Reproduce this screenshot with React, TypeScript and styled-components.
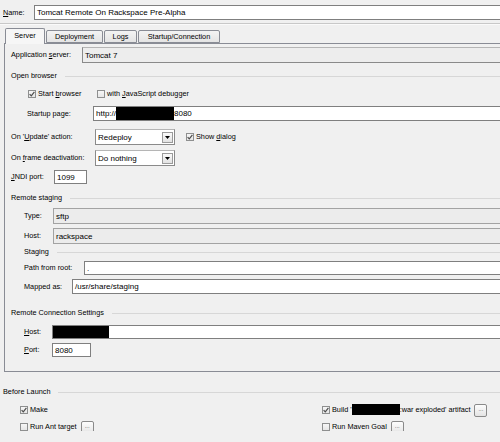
import React from "react";
import styled, { createGlobalStyle } from "styled-components";

const GlobalStyle = createGlobalStyle`
  body {
    margin: 0;
    background: #f0f0f0;
  }
`;

const Root = styled.div`
  width: 500px;
  height: 442px;
  overflow: hidden;
  background: #f0f0f0;
  font-family: "Liberation Sans", Arial, sans-serif;
  font-size: 7.3px;
  color: #000;
`;

// the original capture is cut a little above the window bottom
const Clip = styled.div`
  height: 431px;
  overflow: hidden;
  display: flex;
  flex-direction: column;
`;

const Row = styled.div<{ $top: number; $h: number; $indent: number }>`
  display: flex;
  align-items: center;
  flex: none;
  margin-top: ${(p) => p.$top}px;
  height: ${(p) => p.$h}px;
  padding-left: ${(p) => p.$indent}px;
  white-space: nowrap;
`;

const Label = styled.span<{ $w?: number }>`
  flex: none;
  width: ${(p) => (p.$w ? `${p.$w}px` : "auto")};
  line-height: 1;
`;

const Field = styled.div<{ $w?: number; $gray?: boolean }>`
  box-sizing: border-box;
  height: 100%;
  flex: ${(p) => (p.$w ? "none" : "1")};
  width: ${(p) => (p.$w ? `${p.$w}px` : "auto")};
  display: flex;
  align-items: center;
  padding-left: 2px;
  border: 1px solid ${(p) => (p.$gray ? "#a3a3a3" : "#7f7f7f")};
  background: ${(p) => (p.$gray ? "#ececec" : "#ffffff")};
  font-size: 8px;
  overflow: hidden;
`;

const Redacted = styled.span<{ $w: number }>`
  display: inline-block;
  flex: none;
  width: ${(p) => p.$w}px;
  height: 100%;
  background: #000;
`;

const InlineRedacted = styled.span<{ $w: number }>`
  display: inline-block;
  width: ${(p) => p.$w}px;
  height: 11px;
  background: #000;
  vertical-align: middle;
  margin-top: -2px;
`;

const Separator = styled.div`
  flex: none;
  height: 1px;
  margin-top: 3px;
  background: #c8c8c8;
  border-bottom: 1px solid #fafafa;
`;

const TabBar = styled.div`
  flex: none;
  display: flex;
  align-items: flex-end;
  height: 15px;
  margin-top: 3px;
  padding-left: 5px;
  gap: 1px;
  position: relative;
  z-index: 1;
`;

const Tab = styled.div<{ $active?: boolean; $w: number }>`
  box-sizing: border-box;
  width: ${(p) => p.$w}px;
  height: ${(p) => (p.$active ? 16 : 13)}px;
  margin-bottom: ${(p) => (p.$active ? -1 : 0)}px;
  border: 1px solid #898c95;
  border-bottom: ${(p) => (p.$active ? "none" : "1px solid #898c95")};
  border-radius: 2px 2px 0 0;
  background: ${(p) =>
    p.$active ? "#f6f6f6" : "linear-gradient(#f3f3f3, #e4e4e4)"};
  display: flex;
  align-items: center;
  justify-content: center;
  padding-bottom: ${(p) => (p.$active ? 2 : 0)}px;
`;

const Panel = styled.div`
  box-sizing: border-box;
  flex: none;
  width: 530px;
  height: 329px;
  margin-left: 4px;
  border: 1px solid #898c95;
  display: flex;
  flex-direction: column;
`;

const HeaderLine = styled.div`
  flex: 1;
  height: 1px;
  margin-left: 8px;
  background: #d7d7d7;
`;

const ComboBox = styled.div<{ $w?: number; $gray?: boolean }>`
  box-sizing: border-box;
  height: 100%;
  flex: ${(p) => (p.$w ? "none" : "1")};
  width: ${(p) => (p.$w ? `${p.$w}px` : "auto")};
  display: flex;
  align-items: center;
  padding-left: 2px;
  border: 1px solid #8a8a8a;
  border-top-color: #b5b5b5;
  background: ${(p) => (p.$gray ? "#ededed" : "#ffffff")};
  font-size: 8px;
`;

const ComboText = styled.span`
  flex: 1;
`;

const ComboButton = styled.div`
  box-sizing: border-box;
  width: 11px;
  height: 11px;
  margin-right: 1px;
  border: 1px solid #9a9a9a;
  background: linear-gradient(#fafafa, #e2e2e2);
  display: flex;
  align-items: center;
  justify-content: center;
`;

const CheckWrap = styled.span<{ $w?: number; $ml?: number }>`
  display: inline-flex;
  align-items: center;
  flex: none;
  width: ${(p) => (p.$w ? `${p.$w}px` : "auto")};
  margin-left: ${(p) => p.$ml ?? 0}px;
`;

const CheckText = styled.span`
  line-height: 1;
`;

const Box = styled.span`
  box-sizing: border-box;
  display: inline-flex;
  align-items: center;
  justify-content: center;
  width: 8px;
  height: 8px;
  margin-right: 2px;
  border: 1px solid #8e8f8f;
  background: linear-gradient(#f6f6f6, #e6e6e6);
`;

const DotsButton = styled.span<{ $ml: number }>`
  box-sizing: border-box;
  display: inline-flex;
  align-items: center;
  justify-content: center;
  width: 13px;
  height: 13px;
  margin-left: ${(p) => p.$ml}px;
  border: 1px solid #8a8a8a;
  border-radius: 2px;
  background: linear-gradient(#fdfdfd, #e4e4e4);
  font-size: 6px;
  color: #444;
  line-height: 1;
  padding-bottom: 2px;
`;

const Columns = styled.div`
  display: grid;
  grid-template-columns: 302px 1fr;
  padding-left: 20px;
  align-items: center;
  height: 100%;
  width: 100%;
`;

const Cell = styled.div`
  display: flex;
  align-items: center;
`;

const Check = ({
  checked,
  children,
  w,
  ml,
}: {
  checked?: boolean;
  children: React.ReactNode;
  w?: number;
  ml?: number;
}) => (
  <CheckWrap $w={w} $ml={ml}>
    <Box>
      {checked && (
        <svg width="6" height="6" viewBox="0 0 6 6">
          <path
            d="M0.6 3.1 L2.3 4.9 L5.4 0.8"
            fill="none"
            stroke="#4d4d4d"
            strokeWidth="1.2"
          />
        </svg>
      )}
    </Box>
    <CheckText>{children}</CheckText>
  </CheckWrap>
);

const Combo = ({
  value,
  w,
  gray,
  button,
}: {
  value: string;
  w?: number;
  gray?: boolean;
  button?: boolean;
}) => (
  <ComboBox $w={w} $gray={gray}>
    <ComboText>{value}</ComboText>
    {button && (
      <ComboButton>
        <svg width="5" height="3" viewBox="0 0 5 3">
          <polygon points="0,0 5,0 2.5,3" fill="#000" />
        </svg>
      </ComboButton>
    )}
  </ComboBox>
);

const App = () => {
  return (
    <Root>
      <GlobalStyle />
      <Clip>
        <Row $top={5} $h={15} $indent={3} style={{ width: 530 }}>
          <Label $w={31}>
            <u>N</u>ame:
          </Label>
          <Field>Tomcat Remote On Rackspace Pre-Alpha</Field>
        </Row>
        <Separator />
        <TabBar>
          <Tab $active $w={40}>Server</Tab>
          <Tab $w={57}>Deployment</Tab>
          <Tab $w={33}>Logs</Tab>
          <Tab $w={82}>Startup/Connection</Tab>
        </TabBar>

        <Panel>
          <Row $top={3} $h={16} $indent={6}>
            <Label $w={71}>
              Application <u>s</u>erver:
            </Label>
            <Combo value="Tomcat 7" gray />
          </Row>

          <Row $top={8} $h={10} $indent={6}>
            <Label>Open browser</Label>
            <HeaderLine />
          </Row>
          <Row $top={8} $h={10} $indent={23}>
            <Check checked w={69}>
              Start <u>b</u>rowser
            </Check>
            <Check>
              with <u>J</u>avaScript debugger
            </Check>
          </Row>
          <Row $top={7} $h={15} $indent={22}>
            <Label $w={66}>Startup page:</Label>
            <Field>
              http://
              <Redacted $w={58} />
              8080
            </Field>
          </Row>

          <Row $top={8} $h={16} $indent={6}>
            <Label $w={84}>
              On '<u>U</u>pdate' action:
            </Label>
            <Combo value="Redeploy" w={80} button />
            <Check checked ml={11}>
              Show <u>d</u>ialog
            </Check>
          </Row>
          <Row $top={5} $h={16} $indent={6}>
            <Label $w={84}>
              On <u>f</u>rame deactivation:
            </Label>
            <Combo value="Do nothing" w={80} button />
          </Row>
          <Row $top={4} $h={14} $indent={6}>
            <Label $w={43}>
              <u>J</u>NDI port:
            </Label>
            <Field $w={33}>1099</Field>
          </Row>

          <Row $top={9} $h={10} $indent={6}>
            <Label>Remote staging</Label>
            <HeaderLine />
          </Row>
          <Row $top={5} $h={16} $indent={19}>
            <Label $w={29}>Type:</Label>
            <Field $gray>sftp</Field>
          </Row>
          <Row $top={4} $h={16} $indent={19}>
            <Label $w={29}>Host:</Label>
            <Field $gray>rackspace</Field>
          </Row>
          <Row $top={3} $h={10} $indent={19}>
            <Label>Staging</Label>
            <HeaderLine />
          </Row>
          <Row $top={4} $h={14} $indent={19}>
            <Label $w={60}>Path from root:</Label>
            <Field>.</Field>
          </Row>
          <Row $top={4} $h={15} $indent={19}>
            <Label $w={48}>Mapped as:</Label>
            <Field>/usr/share/staging</Field>
          </Row>

          <Row $top={14} $h={10} $indent={6}>
            <Label>Remote Connection Settings</Label>
            <HeaderLine />
          </Row>
          <Row $top={7} $h={14} $indent={19}>
            <Label $w={28}>
              <u>H</u>ost:
            </Label>
            <Field style={{ paddingLeft: 0 }}>
              <Redacted $w={56} />
            </Field>
          </Row>
          <Row $top={4} $h={14} $indent={19}>
            <Label $w={28}>
              <u>P</u>ort:
            </Label>
            <Field $w={39}>8080</Field>
          </Row>
        </Panel>

        <Row $top={15} $h={10} $indent={3}>
          <Label>Before Launch</Label>
          <HeaderLine />
        </Row>
        <Row $top={6} $h={14} $indent={0}>
          <Columns>
            <Cell>
              <Check checked>Make</Check>
            </Cell>
            <Cell>
              <Check checked>
                Build '<InlineRedacted $w={48} />:war exploded' artifact
              </Check>
              <DotsButton $ml={4}>...</DotsButton>
            </Cell>
          </Columns>
        </Row>
        <Row $top={3} $h={14} $indent={0}>
          <Columns>
            <Cell>
              <Check>Run Ant target</Check>
              <DotsButton $ml={4}>...</DotsButton>
            </Cell>
            <Cell>
              <Check>Run Maven Goal</Check>
              <DotsButton $ml={4}>...</DotsButton>
            </Cell>
          </Columns>
        </Row>
      </Clip>
    </Root>
  );
};

export default App;
